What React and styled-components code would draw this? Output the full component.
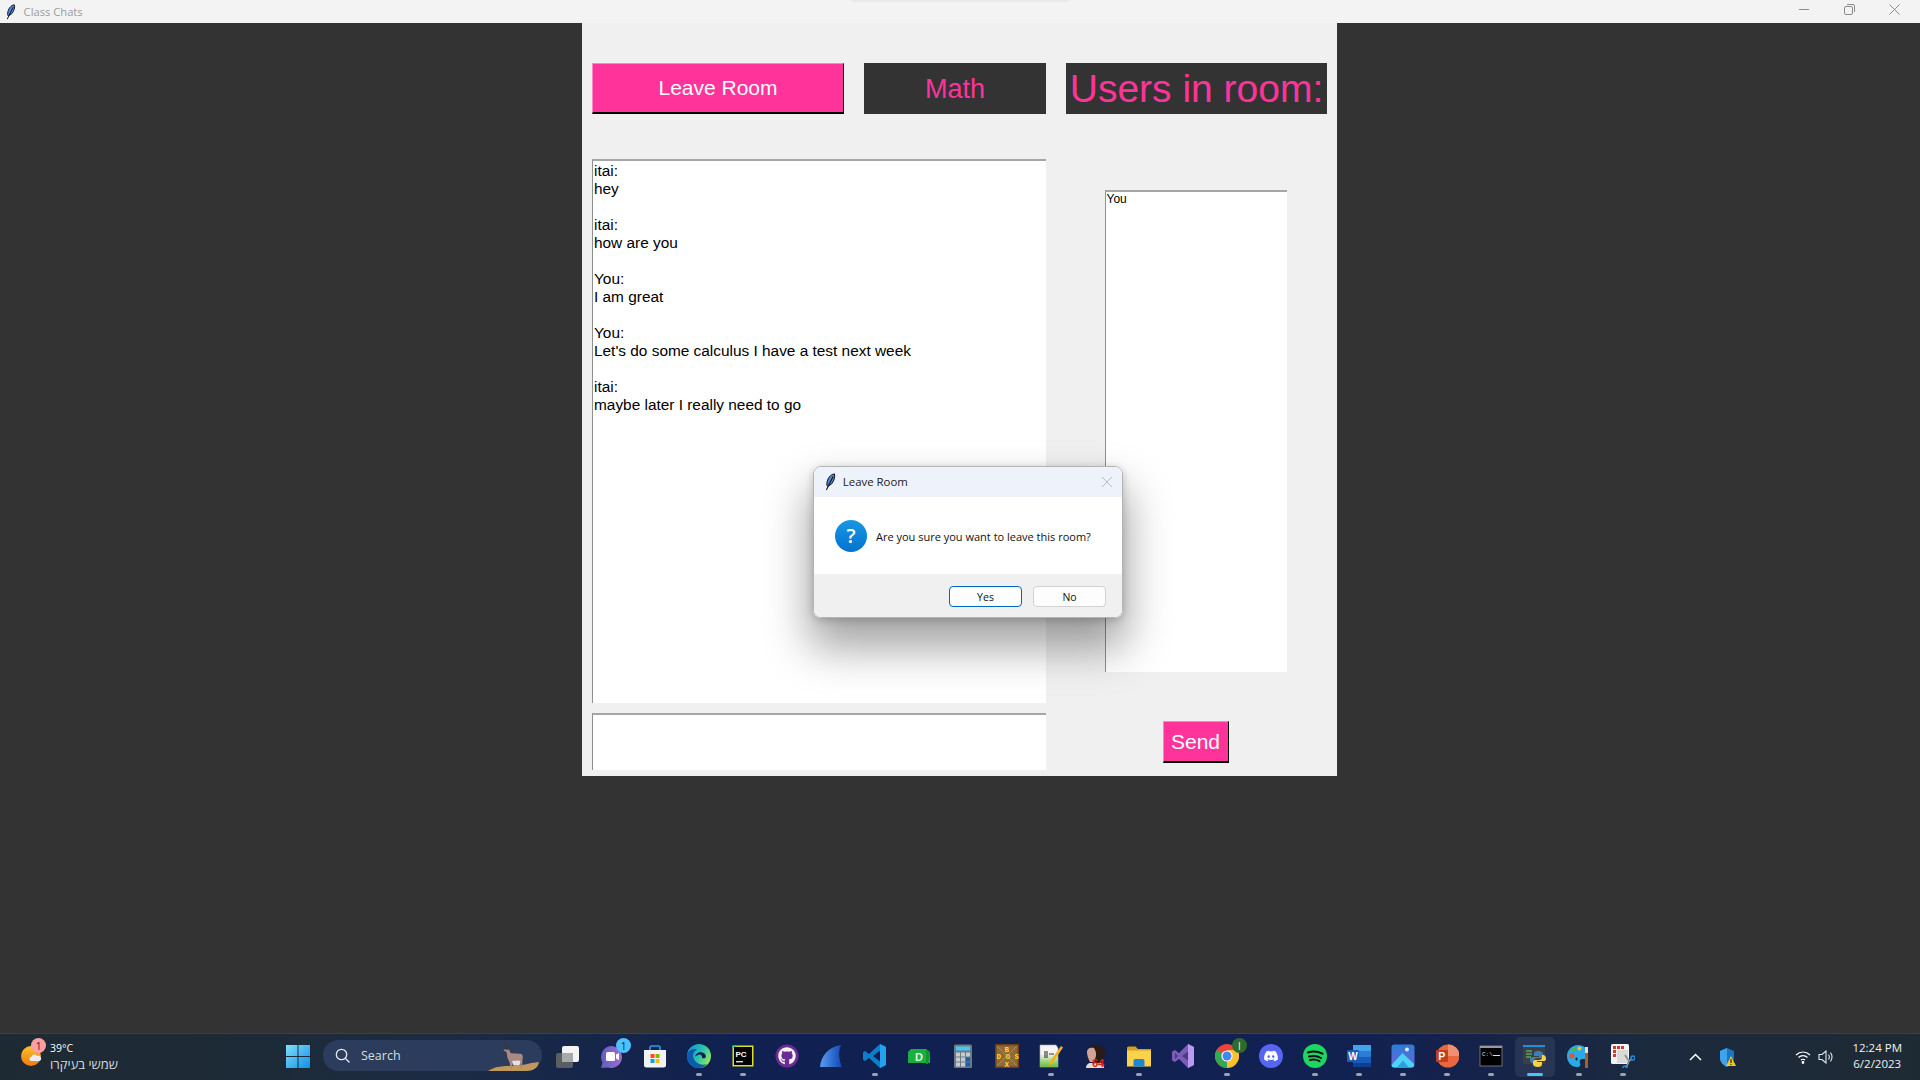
import React from "react";
import styled, { createGlobalStyle } from "styled-components";
import { FaDiscord, FaGithub } from "react-icons/fa";

const Global = createGlobalStyle`
  html, body { margin: 0; padding: 0; height: 100%; overflow: hidden; background: #333; }
  * { box-sizing: border-box; }
`;
const Screen = styled.div`
  position: relative; width: 100vw; height: 100vh; display: flex; flex-direction: column;
  background: #333; font-family: "Liberation Sans", Arial, sans-serif;
`;
const TitleBar = styled.header`
  position: relative; height: 23px; flex: none; background: #f3f3f3; display: flex; align-items: center; padding-left: 6px;
`;
const TopGlow = styled.div`
  position: absolute; left: 852px; top: -2px; width: 216px; height: 2px; box-shadow: 0 0 3px 1px rgba(0,0,0,.07);
`;
const AppTitle = styled.span`
  margin-left: 8px; font: 11.2px "Open Sans", sans-serif; color: #9b9b9b;
`;
const WinControls = styled.div`
  margin-left: auto; display: flex; align-items: center; gap: 34px; padding-right: 20px; margin-top: -4px;
`;
const Main = styled.main`
  flex: 1; display: flex; justify-content: center; align-items: flex-start; min-height: 0; padding-right: 1px;
`;
const Panel = styled.section`
  width: 755px; height: 753px; background: #f0f0f0; padding: 40px 10px 0;
`;
const TopRow = styled.div`
  display: flex; align-items: stretch; height: 51px;
`;
const TkButton = styled.button`
  display: flex; align-items: center; justify-content: center; padding: 0; margin: 0;
  background: #ff3399; color: #fff; font-family: inherit; font-size: ${p => p.$size}px; 
  border-style: solid; border-width: 1px 1px 2px 1px; border-color: #ff85c2 #000 #000 #ff85c2;
`;
const LeaveButton = styled(TkButton)`
  width: 252px; margin-right: 20px;
`;
const RoomLabel = styled.div`
  width: ${p => p.$w}px; margin-right: ${p => p.$gap}px; background: #333; color: #ff3399; font-size: ${p => p.$size}px;
  display: flex; align-items: center; justify-content: center; white-space: nowrap; overflow: hidden; padding-top: ${p => p.$nudge || 0}px;
`;
const Body = styled.div`
  display: flex; margin-top: 45px;
`;
const LeftCol = styled.div`
  width: 454px; display: flex; flex-direction: column; gap: 10px;
`;
const RightCol = styled.div`
  width: 261px; margin-left: 20px; padding: 31px 2px 0 0; display: flex; flex-direction: column; align-items: center;
`;
const TextBox = styled.div`
  width: ${p => p.$w || "100%"}; height: ${p => p.$h}px; background: #fff; color: #000;
  border-top: 2px solid #a6a6a6; border-left: 1px solid #8f8f8f; padding: 0 1px;
`;
const ChatBox = styled(TextBox)`
  font-size: 15.4px; line-height: 18px; padding-top: 1px;
`;
const Message = styled.div`
  margin-bottom: 18px;
`;
const UserBox = styled(TextBox)`
  font-size: 12px; line-height: 15px;
`;
const SendButton = styled(TkButton)`
  width: 66px; height: 42px; margin-top: 49px;
`;

const Dialog = styled.div`
  position: absolute; left: 813px; top: 466px; width: 310px; height: 152px; border-radius: 8px; overflow: hidden;
  border: 1px solid #b4b4b4; display: flex; flex-direction: column; background: #fff;
  font-family: "Open Sans", "Noto Sans", sans-serif;
`;
const DialogShadow = styled.div`
  position: absolute; left: 813px; top: 466px; width: 310px; height: 152px; border-radius: 8px;
  box-shadow: 0 26px 44px 4px rgba(0,0,0,.36), 0 2px 8px rgba(0,0,0,.2);
`;
const DialogTitle = styled.div`
  height: 30px; flex: none; background: #eef2fa; display: flex; align-items: center; padding: 0 10px 0 11px; color: #222; font-size: 11.4px;
  span { margin-left: 7px; margin-top: -1px; }
  svg:last-child { margin-left: auto; }
`;
const DialogBody = styled.div`
  flex: 1; display: flex; align-items: center; padding: 0 21px; gap: 9px; font-size: 11px; color: #111;
`;
const DialogMessage = styled.span`
  padding-top: 2px;
`;
const QuestionMark = styled.div`
  width: 32px; height: 32px; border-radius: 50%; background: linear-gradient(180deg,#1a97e3,#0073cf);
  color: #fff; font: 600 20px "Open Sans", sans-serif; display: flex; align-items: center; justify-content: center;
`;
const DialogFooter = styled.div`
  height: 43px; flex: none; background: #f0f0f0; display: flex; align-items: flex-start; justify-content: flex-end; padding: 12px 16px 0 0; gap: 11px;
`;
const DialogButton = styled.button`
  width: 73px; height: 21px; border-radius: 4px; background: #fdfdfd; padding: 0; color: #111;
  font: 10.5px "Open Sans", sans-serif;
  border: ${p => p.$primary ? "1.5px solid #0067c0" : "1px solid #d2d2d2"};
`;

const Taskbar = styled.footer`
  height: 47px; flex: none; display: flex; align-items: center; color: #fff;
  background: linear-gradient(90deg,#1e2a33 0%,#1d2b38 14%,#1b2b45 24%,#102050 38%,#102152 66%,#14224c 76%,#1c2a3e 86%,#1e2a33 100%);
  font-family: "Open Sans", "Noto Sans", sans-serif;
  border-top: 1px solid #3b4147;
`;
const Weather = styled.div`
  position: relative; width: 276px; flex: none; display: flex; align-items: center; padding-left: 20px; gap: 6px; margin-top: -2px;
`;
const WeatherBadge = styled.div`
  position: absolute; left: 31px; top: -2px; width: 15px; height: 15px; border-radius: 50%;
  background: #ff9ea3; color: #3a1a1a; font-size: 10px; display: flex; align-items: center; justify-content: center;
`;
const WeatherText = styled.div`
  font-size: 10.5px; line-height: 16px; color: #fff;
  div + div { color: #d5d8da; font-family: "Noto Sans", "Open Sans", sans-serif; font-size: 13px; }
`;
const StartButton = styled.div`
  width: 44px; height: 40px; flex: none; display: flex; align-items: center; justify-content: center; margin-top: -2px;
`;
const SearchBox = styled.div`
  position: relative; width: 219px; height: 31px; flex: none; margin: -3px 0 0 3px; border-radius: 16px; background: #2c3c5c;
  display: flex; align-items: center; padding-left: 12px; gap: 11px; color: #d8dce2; font-size: 12.5px; overflow: hidden;
`;
const SearchArt = styled.svg`
  position: absolute; right: 0; top: 0;
`;
const IconRow = styled.div`
  display: flex; margin-left: 3px; flex: none;
`;
const TaskItem = styled.div`
  position: relative; width: 44px; height: 40px; display: flex; align-items: center; justify-content: center; padding-bottom: 2px;
  &::before {
    content: ""; position: absolute; inset: 0 2px; border-radius: 5px;
    background: ${p => p.$active ? "rgba(255,255,255,.07)" : "transparent"};
  }
  &::after {
    content: ""; position: absolute; bottom: 1px; left: 50%; transform: translateX(-50%); height: 3px; border-radius: 2px;
    width: ${p => p.$active ? 16 : p.$dot ? 6 : 0}px; background: ${p => p.$active ? "#4cc2ff" : "#9ba3ad"};
  }
  svg { position: relative; z-index: 1; }
`;
const CountBadge = styled.div`
  position: absolute; z-index: 2; top: 1px; right: 2px; width: 15px; height: 15px; border-radius: 50%;
  background: ${p => p.$bg}; color: ${p => p.$fg}; font-size: 10px; display: flex; align-items: center; justify-content: center;
`;
const Tray = styled.div`
  flex: 1; display: flex; align-items: center; padding-left: 42px;
`;
const TrayIcon = styled.div`
  width: ${p => p.$w}px; display: flex; justify-content: center; flex: none; margin-right: ${p => p.$gap || 0}px;
`;
const Clock = styled.div`
  margin: -2px 0 0 auto; padding-right: 18px; text-align: center; font-size: 11.5px; line-height: 16.5px; color: #f0f2f4;
`;

const Feather = ({ h = 16 }) => (
  <svg width={h * 0.6} height={h} viewBox="0 0 12 20">
    <path d="M10.5 1C6 1.500 2.500 6 2 12c0 1.500.3 2.500 1 3l4.500-3C10 9 11.500 4 10.500 1z" fill="#4f86d8" stroke="#111" strokeWidth="1.100" />
    <path d="M9 4L1.500 19" stroke="#111" strokeWidth="1.200" fill="none" />
  </svg>
);

const ic = { width: 24, height: 24, viewBox: "0 0 24 24" };
const TaskView = () => (<svg {...ic}><rect x="1" y="9" width="17" height="15" rx="2" fill="#5a5d61"/><rect x="7" y="2" width="17" height="16" rx="2" fill="#f4f4f4"/><rect x="7" y="9" width="11" height="9" fill="#a8a9aa"/></svg>);
const Teams = () => (<svg {...ic}><defs><linearGradient id="tm" x1="0" x2="1"><stop offset="0" stopColor="#5f5fc0"/><stop offset="1" stopColor="#a06cd0"/></linearGradient></defs><path d="M12 2a11 11 0 1 1-3 21.600L2 24l1.500-5.500A11 11 0 0 1 12 2z" fill="url(#tm)"/><rect x="7" y="8" width="9" height="9" rx="1.500" fill="#fff"/><path d="M17 10.500l3-1.500v7l-3-1.500z" fill="#fff"/></svg>);
const Store = () => (<svg {...ic}><path d="M7 7V3.500A1.500 1.500 0 0 1 8.500 2h7A1.500 1.500 0 0 1 17 3.500V7" fill="none" stroke="#1fa3e8" strokeWidth="1.600"/><path d="M1 6h22v15a2.500 2.500 0 0 1-2.500 2.500h-17A2.500 2.500 0 0 1 1 21z" fill="#f3f3f3"/><rect x="7.500" y="10" width="4" height="4" fill="#f25022"/><rect x="12.500" y="10" width="4" height="4" fill="#7fba00"/><rect x="7.500" y="15" width="4" height="4" fill="#00a4ef"/><rect x="12.500" y="15" width="4" height="4" fill="#ffb900"/></svg>);
const Edge = () => (<svg {...ic}><defs><linearGradient id="eg" x1="0" y1="0" x2="1" y2="0.600"><stop offset="0" stopColor="#0f8fd8"/><stop offset="0.600" stopColor="#2bc3b0"/><stop offset="1" stopColor="#8ee65a"/></linearGradient></defs><circle cx="12" cy="12" r="12" fill="url(#eg)"/><path d="M0 13C0 7 5 4 10 5.500 7 7 5.500 10 6.500 14c1.500 5 8 8 13.500 6-2.500 2.500-5 4-8.500 4C5 24 0 19 0 13z" fill="#0b5cae"/><path d="M8 12.500c1-3 4-5 7-4 3 .6 4.500 3 3.500 5.200-1 .8-3 .8-3.500 0 .5-2-1.500-4-3.500-3-1.500.4-3 1.800-3.500 1.800z" fill="#0f1f52"/></svg>);
const PyCharm = () => (<svg {...ic}><rect x="1.500" y="1.500" width="21" height="21" fill="#d8e21e"/><path d="M1.500 1.500h4v2h-4z" fill="#21d789"/><rect x="3" y="3" width="18" height="18" fill="#000"/><text x="4.500" y="12.500" fontFamily="Liberation Sans" fontWeight="700" fontSize="8" fill="#fff">PC</text><rect x="5" y="17" width="7" height="1.400" fill="#ddd"/></svg>);
const Github = () => (<svg {...ic}><circle cx="12" cy="12" r="11.500" fill="#6c2a96"/><FaGithub x="3" y="3" size="18" color="#f2f2f2"/></svg>);
const Wireshark = () => (<svg {...ic}><defs><linearGradient id="ws" x1="0" x2="1"><stop offset="0" stopColor="#5a9cf0"/><stop offset="1" stopColor="#0f47b5"/></linearGradient></defs><path d="M1 23C2 12 9 3 22 1c-3 7-2 15 1 22z" fill="url(#ws)"/></svg>);
const VSCode = () => (<svg {...ic}><path d="M17 0l6 3v18l-6 3-11-10-4 3-2-1.500v-7L2 7l4 3zM17 6.500L10 12l7 5.500z" fill="#0f7ec8"/><path d="M17 0l6 3v18l-6 3z" fill="#23a3ef"/></svg>);
const DataIcon = () => (<svg {...ic}><path d="M4 5h15l4 3v11H1V8z" fill="#19b13c"/><path d="M19 5l4 3-2 12h-2z" fill="#11932e"/><text x="8" y="17" fontFamily="Liberation Sans" fontSize="11" fontWeight="700" fill="#dff7e4">D</text></svg>);
const CalcIcon = () => (<svg {...ic}><rect x="3" y="0.500" width="18" height="23.500" rx="1.500" fill="#6d7a85"/><rect x="5" y="2.500" width="14" height="4" fill="#4cc6ee"/>{[0,1,2].flatMap(r=>[0,1,2].map(c=>(<rect key={r+"-"+c} x={5+c*5} y={8.500+r*5} width="4" height="4" fill={c===2&&r>0?"#1b5fa8":"#c4ccd2"}/>)))}</svg>);
const Dosbox = () => (<svg {...ic}><rect width="24" height="24" fill="#6d3f1a"/><rect x="1.500" y="1.500" width="21" height="21" fill="#8f6a36"/><path d="M2 2l20 20M22 2L2 22" stroke="#b39760" strokeWidth=".8"/><g fontFamily="Liberation Mono" fontWeight="700" fontSize="7.500" fill="#ffd23a"><text x="9.500" y="7.500">B</text><text x="1.500" y="15">D O S</text><text x="9.500" y="22.500">X</text></g></svg>);
const NotepadPP = () => (<svg {...ic}><defs><linearGradient id="np" x1="0" y1="0" x2="0" y2="1"><stop offset="0.400" stopColor="#f4f4f4"/><stop offset="1" stopColor="#5fc02c"/></linearGradient></defs><path d="M1 1h16l2 3v19H1z" fill="url(#np)" stroke="#aaa" strokeWidth=".6"/><path d="M6 7v7M8 7v7M10 10h5" stroke="#333" strokeWidth="1.100"/><path d="M22 2l2 1.500L13 20l-3 1.500.5-3.500z" fill="#f2b21c"/></svg>);
const Gimp = () => (<svg {...ic}><path d="M6 6C6 1 12 0 15 1c5 1 8 5 7 10-1 4-2 8-6 9H9C7 16 6 11 6 6z" fill="#2a1a18"/><path d="M4 8C4 4 8 3 11 4c2 3 3 7 1 11l-1 3H7C5 14 4 11 4 8z" fill="#d2a493"/><path d="M3 24c0-3 2-5 5-5h8c3 0 5 2 5 5z" fill="#e9d9ce"/><text x="9" y="23" fontFamily="Liberation Sans" fontWeight="700" fontSize="11" fill="#d2231e">64</text></svg>);
const Folder = () => (<svg {...ic}><path d="M0 4a1.500 1.500 0 0 1 1.500-1.500h7L11 5h13v3H0z" fill="#d69f1b"/><path d="M0 6.500h24v16H0z" fill="#fbd24a"/><path d="M6.500 17a2 2 0 0 1 2-2h7a2 2 0 0 1 2 2v5.500h-11z" fill="#1c87d8"/></svg>);
const VStudio = () => (<svg {...ic}><path d="M17 0l6 3v18l-6 3-9-9-4 3-3-1.500v-9L4 6l4 3z" fill="#7a5bb8"/><path d="M17 0l6 3v18l-6 3z" fill="#b99af0"/><path d="M4 9v6l3-3zM11 12l6 4.500v-9z" fill="#4a3a80"/></svg>);
const Chrome = () => (<svg {...ic}><circle cx="12" cy="12" r="12" fill="#e8453c"/><path d="M12 24A12 12 0 0 1 1.600 6L12 12z" fill="#34a853"/><path d="M12 24A12 12 0 0 0 22.400 6H12z" fill="#fbc02d"/><circle cx="12" cy="12" r="5.600" fill="#fff"/><circle cx="12" cy="12" r="4.500" fill="#4285f4"/></svg>);
const Discord = () => (<svg {...ic}><circle cx="12" cy="12" r="12" fill="#5865f2"/><FaDiscord x="4.500" y="4.500" size="15" color="#fff"/></svg>);
const Spotify = () => (<svg {...ic}><circle cx="12" cy="12" r="12" fill="#1ed760"/><path d="M5 8.500c5-1.500 10-1 14.500 1.200M6 12.500c4-1 8.500-.6 12 1.500M7 16c3.500-.8 6.500-.4 9.500 1.200" fill="none" stroke="#111" strokeWidth="2" strokeLinecap="round"/></svg>);
const Word = () => (<svg {...ic}><rect x="6" y="1" width="18" height="6" fill="#41a5ee"/><rect x="6" y="7" width="18" height="6" fill="#2b7cd3"/><rect x="6" y="13" width="18" height="6" fill="#185abd"/><rect x="6" y="19" width="18" height="4" fill="#103f91"/><rect x="0" y="6" width="12" height="12" rx="1" fill="#1a5bbd"/><text x="1.300" y="15.500" fontFamily="Liberation Sans" fontWeight="700" fontSize="10" fill="#fff">W</text></svg>);
const Photos = () => (<svg {...ic}><defs><linearGradient id="ph" x1="0" y1="0" x2="0" y2="1"><stop offset="0" stopColor="#2a7ed8"/><stop offset="1" stopColor="#6c63d8"/></linearGradient></defs><rect width="23" height="23" x="0.500" y="0.500" rx="3" fill="url(#ph)"/><circle cx="16" cy="5.500" r="2" fill="#e6e6fa"/><path d="M0.500 21l11-12 11.500 11v1a2.500 2.500 0 0 1-2.500 2.500h-18A2.500 2.500 0 0 1 .5 21z" fill="#4ed2f5"/><path d="M6 23.500l6-7 6 7z" fill="#2b9fe0"/></svg>);
const PPT = () => (<svg {...ic}><circle cx="13" cy="12" r="11.500" fill="#e8673f"/><path d="M13 .5A11.500 11.500 0 0 1 24.500 12H13z" fill="#f09070"/><rect x="1" y="6" width="12" height="12" rx="1" fill="#c43e1c"/><text x="3.300" y="15.800" fontFamily="Liberation Sans" fontWeight="700" fontSize="10.500" fill="#fff">P</text></svg>);
const Cmd = () => (<svg {...ic}><rect x="1" y="2" width="22" height="20" fill="#000" stroke="#888" strokeWidth="0.800"/><rect x="1" y="2" width="22" height="2" fill="#9a9a9a"/><text x="3" y="12" fontFamily="Liberation Mono" fontSize="6" fill="#ddd">C:\</text><rect x="14" y="11" width="7" height="1" fill="#ddd"/></svg>);
const Python = () => (<svg {...ic}><rect x="0" y="1" width="22" height="19" fill="#3a4048"/><rect x="0" y="1" width="22" height="2" fill="#1f8fe0"/><path d="M3 7h6M3 10h6M3 13h5" stroke="#58a55a" strokeWidth="1.500"/><path d="M14 7c-3 0-4 1-4 3v2h5v1H8c-2 0-2 2-2 3s1 3 3 3h1v-2c0-2 1-3 3-3h4c1 0 2-1 2-2v-2c0-2-2-3-5-3z" fill="#3f7fb5" transform="translate(1 0)"/><path d="M17 24c3 0 4-1 4-3v-2h-5v-1h7c2 0 2-2 2-3s-1-3-3-3h-1v2c0 2-1 3-3 3h-4c-1 0-2 1-2 2v2c0 2 2 3 5 3z" fill="#f5d24a" transform="translate(-2 -1)"/></svg>);
const Paint = () => (<svg {...ic}><path d="M11 1C5 1 0 6 0 12s4 11 10 11c3 0 4-2 3-4-1-3 1-4 3-4h2c2 0 3-2 3-4C21 5 17 1 11 1z" fill="#2aa8e8"/><circle cx="5" cy="12" r="2.500" fill="#e8552b"/><circle cx="7" cy="6" r="2.200" fill="#49b848"/><circle cx="12.500" cy="4.500" r="2" fill="#f5c518"/><path d="M8 15h3M9.500 13.500v3" stroke="#123" strokeWidth="1"/><rect x="18" y="9" width="3" height="15" fill="#a4622a"/><rect x="18" y="3" width="3" height="6" fill="#e8e0d0"/></svg>);
const Snip = () => (<svg {...ic}><rect x="0" y="0" width="18" height="20" rx="1.500" fill="#f5f5f5"/>{[[2,2],[6,2],[10,2],[2,6],[2,10]].map(([x,y])=>(<rect key={x+"-"+y} x={x} y={y} width="3" height="3" fill="#d8392b"/>))}<rect x="6" y="6" width="11" height="13" fill="#d9d9d9"/><path d="M14 11l4 6 3-2M15 24l3-7" stroke="#8a8f94" strokeWidth="1.800" fill="none"/><circle cx="22" cy="14" r="2" fill="none" stroke="#1b8fe0" strokeWidth="1.500"/><circle cx="14" cy="24" r="2" fill="none" stroke="#1b8fe0" strokeWidth="1.500"/></svg>);

const icons = [
  { I: TaskView }, { I: Teams, badge: ["1", "#4cc2ff", "#10233f"] }, { I: Store }, { I: Edge, dot: 1 }, { I: PyCharm, dot: 1 },
  { I: Github }, { I: Wireshark }, { I: VSCode, dot: 1 }, { I: DataIcon }, { I: CalcIcon }, { I: Dosbox },
  { I: NotepadPP, dot: 1 }, { I: Gimp }, { I: Folder, dot: 1 }, { I: VStudio }, { I: Chrome, dot: 1, badge: ["I", "#2f6b2a", "#dfe"] },
  { I: Discord }, { I: Spotify, dot: 1 }, { I: Word, dot: 1 }, { I: Photos, dot: 1 }, { I: PPT, dot: 1 }, { I: Cmd, dot: 1 },
  { I: Python, active: 1 }, { I: Paint, dot: 1 }, { I: Snip, dot: 1 },
];

const messages = [
  ["itai:", "hey"], ["itai:", "how are you"], ["You:", "I am great"],
  ["You:", "Let's do some calculus I have a test next week"], ["itai:", "maybe later I really need to go"],
];

export default function App() {
  return (
    <Screen>
      <Global />
      <TitleBar>
        <TopGlow />
        <Feather h={16} />
        <AppTitle>Class Chats</AppTitle>
        <WinControls>
          <svg width="11" height="11" viewBox="0 0 11 11"><path d="M0 5.500h10" stroke="#8c8c8c" /></svg>
          <svg width="11" height="11" viewBox="0 0 11 11" fill="none" stroke="#8c8c8c"><rect x=".5" y="2.500" width="8" height="8" rx="1.500" /><path d="M3 .5h6a1.500 1.500 0 0 1 1.500 1.500v6" /></svg>
          <svg width="11" height="11" viewBox="0 0 11 11"><path d="M.5.5l10 10M10.500.5l-10 10" stroke="#8c8c8c" /></svg>
        </WinControls>
      </TitleBar>
      <Main>
        <Panel>
          <TopRow>
            <LeaveButton $size={21}>Leave Room</LeaveButton>
            <RoomLabel $w={182} $gap={20} $size={27} $nudge={2}>Math</RoomLabel>
            <RoomLabel $w={261} $gap={0} $size={39}>Users in room:</RoomLabel>
          </TopRow>
          <Body>
            <LeftCol>
              <ChatBox $h={544}>
                {messages.map((m, i) => (
                  <Message key={i}><div>{m[0]}</div><div>{m[1]}</div></Message>
                ))}
              </ChatBox>
              <TextBox $h={57} />
            </LeftCol>
            <RightCol>
              <UserBox $w="182px" $h={482}>You</UserBox>
              <SendButton $size={21}>Send</SendButton>
            </RightCol>
          </Body>
        </Panel>
      </Main>
      <Taskbar>
        <Weather>
          <svg width="24" height="24" viewBox="0 0 24 24">
            <defs><linearGradient id="sun" x1="0" y1="0" x2="0" y2="1"><stop offset="0" stopColor="#fbc02d" /><stop offset="1" stopColor="#f07a10" /></linearGradient></defs>
            <circle cx="11" cy="12" r="10" fill="url(#sun)" />
            <path d="M11 17a2.200 2.200 0 0 1 .5-4.300 3 3 0 0 1 5.500-.7 2.600 2.600 0 0 1 2.500 5z" fill="#e8eef6" />
          </svg>
          <WeatherBadge>1</WeatherBadge>
          <WeatherText>
            <div>39°C</div>
            <div dir="rtl">שמשי בעיקרו</div>
          </WeatherText>
        </Weather>
        <StartButton>
          <svg width="24" height="24" viewBox="0 0 24 24">
            <defs><linearGradient id="win" x1="0" y1="0" x2="1" y2="1"><stop offset="0" stopColor="#7fe0f8" /><stop offset="1" stopColor="#0f8fe8" /></linearGradient></defs>
            <path d="M0 1h11.500v11H0zM12.500 1H24v11H12.500zM0 13h11.500v11H0zM12.500 13H24v11H12.500z" fill="url(#win)" />
          </svg>
        </StartButton>
        <SearchBox>
          <svg width="15" height="15" viewBox="0 0 15 15" fill="none" stroke="#e6e8ec" strokeWidth="1.300"><circle cx="6.500" cy="6.500" r="5.200" /><path d="M10.500 10.500l4 4" /></svg>
          Search
          <SearchArt width="56" height="31" viewBox="0 0 56 31">
            <path d="M2 31C8 27 14 26 26 26c10 0 16-3 27-4l-3 9z" fill="#c2975c" />
            <path d="M18 9.500h5l1.500 3.500c4 .8 8 .5 11 1 1.500 1 1.500 3 1 6l-.5 9h-1l-1-7-7 .5-1.500 6.500h-1l-1-7-2-4-1-6-3-1.500z" fill="#a88a80" />
            <path d="M26 21l7-.5 1.500 1-1 4h-6z" fill="#e6e0e6" />
            <path d="M20 9.500l-1-6.500M22 9.500l1.500-6.500" stroke="#3d3340" strokeWidth="1" />
          </SearchArt>
        </SearchBox>
        <IconRow>
          {icons.map(({ I, dot, active, badge }, i) => (
            <TaskItem key={i} $dot={dot} $active={active}>
              <I />
              {badge && <CountBadge $bg={badge[1]} $fg={badge[2]}>{badge[0]}</CountBadge>}
            </TaskItem>
          ))}
        </IconRow>
        <Tray>
          <TrayIcon $w={16} $gap={17}>
            <svg width="13" height="8" viewBox="0 0 13 8"><path d="M1 7l5.500-5.500L12 7" fill="none" stroke="#fff" strokeWidth="1.500" /></svg>
          </TrayIcon>
          <TrayIcon $w={16} $gap={59}>
            <svg width="16" height="19" viewBox="0 0 16 19"><path d="M7 0l7 3v7c0 4-3 7-7 9-4-2-7-5-7-9V3z" fill="#1477c8" /><path d="M7 0v19C3 17 0 14 0 10V3z" fill="#3ea3ea"/><path d="M11 8l5 10H6z" fill="#f5c518" /><path d="M11 11v4M11 16v1" stroke="#111" /></svg>
          </TrayIcon>
          <TrayIcon $w={16} $gap={7}>
            <svg width="16" height="14" viewBox="0 0 16 14" fill="none" stroke="#fff" strokeWidth="1.200"><path d="M1 5c4-4 10-4 14 0M3.500 7.500c2.500-2.500 6.500-2.500 9 0M6 10c1-1 3-1 4 0" /><circle cx="8" cy="12.500" r=".8" fill="#fff" /></svg>
          </TrayIcon>
          <TrayIcon $w={16}>
            <svg width="16" height="14" viewBox="0 0 16 14" fill="none" stroke="#e8e8e8" strokeWidth="1.100"><path d="M1 4.500h3L8 1v12L4 9.500H1z" /><path d="M10.500 4.500c1 1.500 1 3.500 0 5M12.500 2.500c2 3 2 6 0 9" /></svg>
          </TrayIcon>
          <Clock>
            <div>12:24 PM</div>
            <div>6/2/2023</div>
          </Clock>
        </Tray>
      </Taskbar>
      <DialogShadow />
      <Dialog>
        <DialogTitle>
          <Feather h={18} />
          <span>Leave Room</span>
          <svg width="10" height="10" viewBox="0 0 10 10"><path d="M0 0l10 10M10 0L0 10" stroke="#b9bcc2" /></svg>
        </DialogTitle>
        <DialogBody>
          <QuestionMark>?</QuestionMark>
          <DialogMessage>Are you sure you want to leave this room?</DialogMessage>
        </DialogBody>
        <DialogFooter>
          <DialogButton $primary>Yes</DialogButton>
          <DialogButton>No</DialogButton>
        </DialogFooter>
      </Dialog>
    </Screen>
  );
}
